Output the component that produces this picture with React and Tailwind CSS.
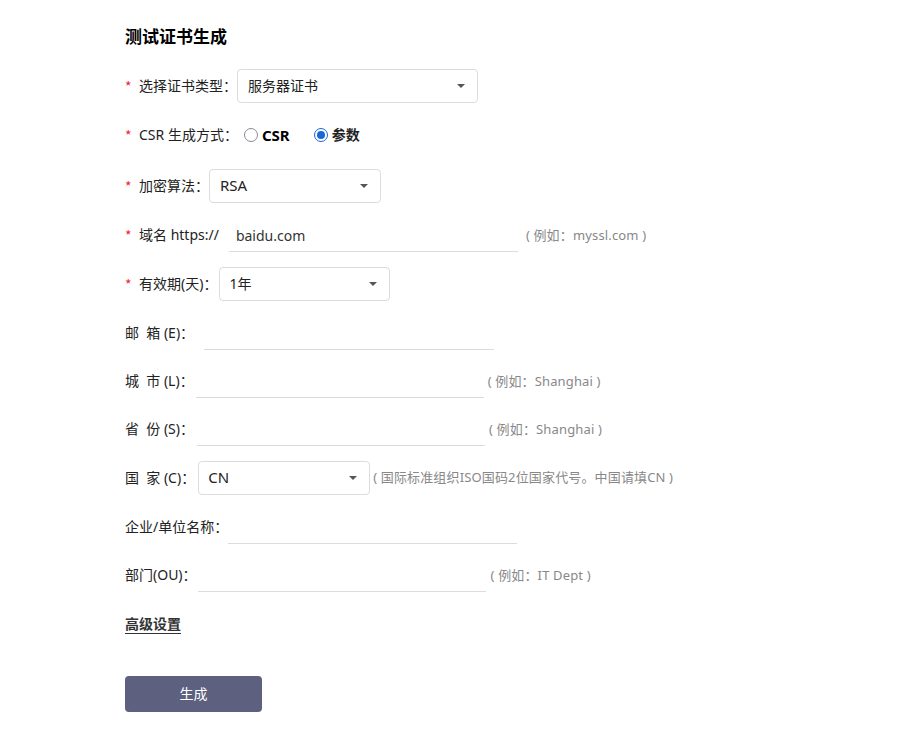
const font = "[font-family:'Noto_Sans','Noto_Sans_CJK_SC',sans-serif]";

function Caret() {
  return <span className="ml-auto w-0 h-0 border-x-[4px] border-x-transparent border-t-[4px] border-t-[#555]" />;
}

function Select({ value, width, ml = "", text = "text-sm", pad = "pl-[10px]", inner = "" }) {
  return (
    <div className={`flex items-center h-[34px] border border-[#dcdcdc] rounded-[4px] pr-[12px] bg-white ${pad} ${text} ${width} ${ml}`}>
      <span className={`text-[#222] ${inner}`}>{value}</span>
      <Caret />
    </div>
  );
}

function Label({ req, children }) {
  return (
    <span className="text-sm text-[#222] flex items-center whitespace-pre">
      {req && <span className="[font-family:'Noto_Sans_CJK_SC',sans-serif] text-[#f5222d] w-[14px] leading-none">*</span>}
      {children}
    </span>
  );
}

function Field({ value, width, ml }) {
  return (
    <div className={`h-[34px] border-b border-[#dcdcdc] pl-[7px] pt-[2px] flex items-center text-sm text-[#333] ${width} ${ml}`}>
      {value}
    </div>
  );
}

function Hint({ children, ml, cls = "pt-[2px]" }) {
  return <span className={`text-[13px] tracking-[0.15px] text-[#888] whitespace-pre ${cls} ${ml}`}>{children}</span>;
}

function Row({ children, cls = "mb-[15px]" }) {
  return <div className={`flex items-center h-[34px] ${cls}`}>{children}</div>;
}

function Radio({ checked }) {
  return checked ? (
    <span className="w-[14px] h-[14px] rounded-full border border-[#1a66d6] flex items-center justify-center">
      <span className="w-[8px] h-[8px] rounded-full bg-[#1a66d6]" />
    </span>
  ) : (
    <span className="w-[14px] h-[14px] rounded-full border border-[#8a8a94]" />
  );
}

export default function App() {
  return (
    <div className={`${font} bg-white w-[920px] h-[749px] pl-[125px] pt-[25px] overflow-hidden`}>
      <h1 className="text-[17px] font-bold text-black leading-[24px] mb-[8px]">测试证书生成</h1>
      <div className="pt-[12px]">
        <Row>
          <Label req>选择证书类型：</Label>
          <Select value="服务器证书" width="w-[241px]" />
        </Row>
        <Row cls="mb-[17px]">
          <Label req>CSR 生成方式：</Label>
          <label className="flex items-center ml-[6px]">
            <Radio />
            <span className="ml-[4px] text-[15px] font-bold text-black">CSR</span>
          </label>
          <label className="flex items-center ml-[24px]">
            <Radio checked />
            <span className="ml-[4px] text-sm font-bold text-[#222]">参数</span>
          </label>
        </Row>
        <Row>
          <Label req>加密算法：</Label>
          <Select value="RSA" width="w-[172px]" text="text-[15px]" inner="pb-[2px]" />
        </Row>
        <Row>
          <Label req>域名 https://</Label>
          <Field value="baidu.com" width="w-[289px]" ml="ml-[10px]" />
          <Hint ml="ml-[8px]">( 例如：myssl.com )</Hint>
        </Row>
        <Row>
          <Label req>有效期(天)：</Label>
          <Select value="1年" width="w-[171px]" ml="ml-[2px]" pad="pl-[9px]" />
        </Row>
        <Row cls="mb-[14px]">
          <Label>邮  箱 (E)：</Label>
          <Field width="w-[290px]" ml="ml-[10px]" />
        </Row>
        <Row cls="mb-[14px]">
          <Label>城  市 (L)：</Label>
          <Field width="w-[288px]" ml="ml-[2px]" />
          <Hint ml="ml-[4px]">( 例如：Shanghai )</Hint>
        </Row>
        <Row>
          <Label>省  份 (S)：</Label>
          <Field width="w-[288px]" ml="ml-[3px]" />
          <Hint ml="ml-[4px]">( 例如：Shanghai )</Hint>
        </Row>
        <Row>
          <Label>国  家 (C)：</Label>
          <Select value="CN" width="w-[172px]" ml="ml-[3px]" text="text-[15px]" pad="pl-[9px]" inner="pb-[2px]" />
          <Hint ml="ml-[3px]" cls="">( 国际标准组织ISO国码2位国家代号。中国请填CN )</Hint>
        </Row>
        <Row cls="mb-[14px]">
          <Label>企业/单位名称：</Label>
          <Field width="w-[289px]" ml="ml-[0px]" />
        </Row>
        <Row cls="mb-0">
          <Label>部门(OU)：</Label>
          <Field width="w-[288px]" ml="ml-[1px]" />
          <Hint ml="ml-[5px]">( 例如：IT Dept )</Hint>
        </Row>
      </div>
      <div className="mt-[19px] h-[34px]">
        <a className="inline-block text-sm font-bold text-[#333] border-b border-[#333] leading-[18px]">高级设置</a>
      </div>
      <button className="mt-[31px] block w-[137px] h-[36px] rounded-[4px] bg-[#5d607f] text-white text-sm text-center">生成</button>
    </div>
  );
}
